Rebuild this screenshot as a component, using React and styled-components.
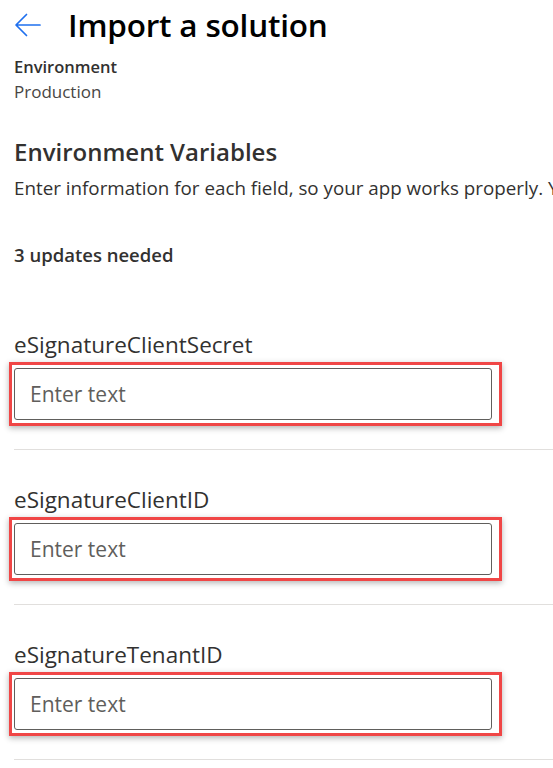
import styled, { createGlobalStyle } from "styled-components";

const GlobalStyle = createGlobalStyle`
  body {
    margin: 0;
    background: #ffffff;
    font-family: "Open Sans", "Noto Sans", sans-serif;
    color: #323130;
    overflow: hidden;
  }
`;

const fields = ["eSignatureClientSecret", "eSignatureClientID", "eSignatureTenantID"];

const BackArrow = () => (
  <svg width="28" height="24" viewBox="0 0 28 24" fill="none">
    <path
      d="M26 12H2.5M12.5 1.5L2 12l10.5 10.5"
      stroke="#1f70ee"
      strokeWidth="1.7"
      strokeLinecap="round"
      strokeLinejoin="round"
    />
  </svg>
);

export default function App() {
  return (
    <>
      <GlobalStyle />
      <Page>
        <Header>
          <BackButton aria-label="Back">
            <BackArrow />
          </BackButton>
          <Title>Import a solution</Title>
        </Header>

        <EnvLabel>Environment</EnvLabel>
        <EnvValue>Production</EnvValue>

        <SectionTitle>Environment Variables</SectionTitle>
        <Description>
          Enter information for each field, so your app works properly. You can change these later.
        </Description>
        <Count>3 updates needed</Count>

        <FieldList>
          {fields.map((name) => (
            <Field key={name}>
              <FieldLabel>{name}</FieldLabel>
              <Highlight>
                <TextInput placeholder="Enter text" />
              </Highlight>
              <Divider />
            </Field>
          ))}
        </FieldList>
      </Page>
    </>
  );
}

const Page = styled.div`
  padding: 3px 0 0 14px;
  width: 553px;
  box-sizing: border-box;
  height: 768px;
  overflow: hidden;
`;

const Header = styled.div`
  display: flex;
  align-items: center;
  gap: 26px;
  height: 44px;
`;

const BackButton = styled.button`
  display: flex;
  align-items: center;
  padding: 0;
  margin: 0;
  border: none;
  background: none;
  cursor: pointer;
`;

const Title = styled.h1`
  margin: 0;
  font-size: 31.5px;
  line-height: 40px;
  font-weight: 600;
  color: #000000;
  letter-spacing: -0.2px;
`;

const EnvLabel = styled.div`
  margin-top: 9px;
  font-size: 16.5px;
  line-height: 22px;
  font-weight: 600;
  color: #323130;
`;

const EnvValue = styled.div`
  margin-top: 2px;
  font-size: 17px;
  line-height: 24px;
  color: #484644;
`;

const SectionTitle = styled.h2`
  margin: 32px 0 0;
  font-size: 24px;
  line-height: 32px;
  font-weight: 600;
  color: #323130;
`;

const Description = styled.p`
  margin: 7px 0 0;
  font-size: 18.8px;
  line-height: 26px;
  white-space: nowrap;
  overflow: hidden;
  color: #323130;
`;

const Count = styled.div`
  margin-top: 41px;
  font-size: 18.5px;
  line-height: 26px;
  font-weight: 600;
  color: #323130;
`;

const FieldList = styled.div`
  margin-top: 62px;
  display: flex;
  flex-direction: column;
  gap: 35px;
`;

const Field = styled.div`
  display: flex;
  flex-direction: column;
`;

const FieldLabel = styled.label`
  font-size: 22.5px;
  line-height: 30px;
  font-weight: 500;
  color: #323130;
`;

const Highlight = styled.div`
  margin: 2px 0 0 -5px;
  width: 493px;
  box-sizing: border-box;
  padding: 3px 7px 3px 2px;
  border: 3px solid #f04646;
  box-shadow: 0 2px 6px rgba(0, 0, 0, 0.3);
`;

const TextInput = styled.input`
  display: block;
  width: 100%;
  height: 52px;
  box-sizing: border-box;
  padding: 0 15px;
  border: 1px solid #605e5c;
  border-radius: 3px;
  font-family: "Open Sans", "Noto Sans", sans-serif;
  font-size: 21px;
  color: #323130;
  background: #ffffff;
  outline: none;

  &::placeholder {
    color: #605e5c;
  }
`;

const Divider = styled.div`
  margin-top: 23px;
  height: 1px;
  background: #e1dfdd;
`;
